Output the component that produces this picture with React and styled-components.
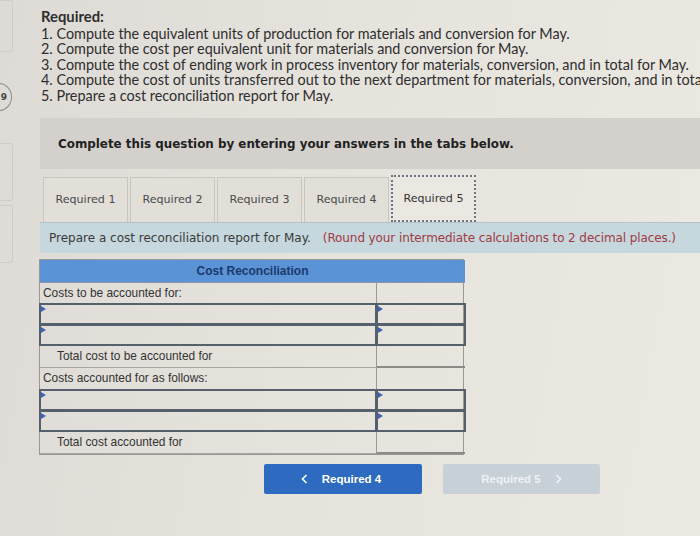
import React from "react";
import styled, { createGlobalStyle } from "styled-components";

const Global = createGlobalStyle`
  html, body { margin: 0; padding: 0; }
  body {
    width: 700px; height: 536px; overflow: hidden;
    background: linear-gradient(100deg, #dedbd6 0%, #e6e3dd 45%, #ece9e3 100%);
    font-family: "Liberation Sans", Arial, sans-serif;
  }
`;

const Page = styled.div`
  display: flex;
  width: 700px;
  height: 536px;
  overflow: hidden;
`;

const Rail = styled.div`
  width: 13px;
  flex: none;
  margin-right: 27px;
  display: flex;
  flex-direction: column;
`;

const RailBox = styled.div`
  height: ${(p) => p.$h}px;
  margin-top: ${(p) => p.$mt || 0}px;
  border: 1px solid #d0cdc8;
  border-left: none;
  border-radius: 0 3px 3px 0;
`;

const Badge = styled.div`
  margin-top: ${(p) => p.$mt}px;
  width: 26px;
  height: 28px;
  margin-left: -14px;
  border: 1px solid #8e8c88;
  border-radius: 50%;
  display: flex;
  align-items: center;
  justify-content: flex-end;
  padding-right: 4px;
  box-sizing: border-box;
  font: bold 9px "DejaVu Sans", sans-serif;
  color: #444;
`;

const Main = styled.div`
  flex: 1;
  min-width: 0;
  display: flex;
  flex-direction: column;
  padding-top: 9px;
`;

const Intro = styled.div`
  font-family: Lato, "Open Sans", sans-serif;
  font-size: 14.4px;
  line-height: 15.6px;
  color: #2e2e2e;
  white-space: nowrap;
  padding-left: 1px;
`;

const IntroTitle = styled.div`
  font-weight: 700;
  font-size: 14.8px;
  margin-bottom: 1px;
`;

const Banner = styled.div`
  margin-top: 14px;
  height: 51px;
  background: #d4d1cc;
  display: flex;
  align-items: center;
  padding-left: 18px;
  padding-top: 1px;
  box-sizing: border-box;
  font: bold 11.9px "DejaVu Sans", Verdana, sans-serif;
  color: #222;
  white-space: nowrap;
`;

const Tabs = styled.div`
  display: flex;
  align-items: flex-end;
  gap: 2px;
  margin-top: 5px;
  padding-left: 3px;
  height: 48px;
`;

const Tab = styled.div`
  width: 85px;
  height: ${(p) => (p.$active ? 47 : 45)}px;
  box-sizing: border-box;
  display: flex;
  align-items: center;
  justify-content: center;
  font: 11.1px "DejaVu Sans", Verdana, sans-serif;
  color: ${(p) => (p.$active ? "#333" : "#4a4a4a")};
  background: ${(p) => (p.$active ? "#ebe8e2" : "#e2dfd9")};
  border: ${(p) => (p.$active ? "2px dotted #6d7585" : "1px solid #c9c5bf")};
  border-bottom: ${(p) => (p.$active ? "2px dotted #6d7585" : "none")};
`;

const Info = styled.div`
  height: 30px;
  background: #c6d8dd;
  border-top: 1px solid #b3c3c8;
  display: flex;
  align-items: center;
  padding-left: 9px;
  font: 12px "DejaVu Sans", Verdana, sans-serif;
  color: #3a3a3a;
  white-space: nowrap;
`;

const Note = styled.span`
  color: #a23a44;
  margin-left: 12px;
  letter-spacing: -0.1px;
`;

const Table = styled.div`
  margin-top: 6px;
  margin-left: -1px;
  width: 425px;
  display: grid;
  grid-template-columns: 337px 88px;
  border: 1px solid #9a9896;
  box-sizing: border-box;
`;

const Head = styled.div`
  grid-column: 1 / 3;
  height: 22px;
  background: #5a93d6;
  display: flex;
  align-items: center;
  justify-content: center;
  font: bold 12px "Liberation Sans", Arial, sans-serif;
  color: #1c3a6c;
  border-bottom: 1px solid #8a98aa;
`;

const Cell = styled.div`
  position: relative;
  height: ${(p) => (p.$tall ? 22 : 21)}px;
  box-sizing: border-box;
  display: flex;
  align-items: center;
  padding-left: ${(p) => (p.$indent ? 17 : 3)}px;
  font: 11.9px "Liberation Sans", Arial, sans-serif;
  color: #333;
  border-right: ${(p) => (p.$last ? "none" : "1px solid #9a9896")};
  border-bottom: ${(p) => (p.$total ? "2px solid #8d8b88" : "1px solid #a8a6a3")};
  ${(p) =>
    p.$input &&
    `
    border: 2px solid #56606d;
    margin: -1px ${p.$last ? "-1px" : "0"} 0 -1px;
    height: 22px;
  `}
`;

const Marker = styled.span`
  position: absolute;
  left: 0;
  top: 1px;
  width: 0;
  height: 0;
  border-top: 3px solid transparent;
  border-bottom: 3px solid transparent;
  border-left: 5px solid #3e64b8;
`;

const Buttons = styled.div`
  display: flex;
  gap: 21px;
  margin-top: 9px;
  padding-left: 224px;
`;

const NavButton = styled.div`
  width: ${(p) => p.$w}px;
  height: 30px;
  border-radius: 2px;
  display: flex;
  align-items: center;
  justify-content: center;
  gap: 14px;
  font: bold 11.5px "Liberation Sans", Arial, sans-serif;
  color: ${(p) => (p.$disabled ? "#eef2f6" : "#fff")};
  background: ${(p) => (p.$disabled ? "#c8d0d8" : "#2d6ac0")};
  padding-right: ${(p) => (p.$disabled ? 0 : 4)}px;
`;

const Chevron = styled.svg`
  width: 7px;
  height: 10px;
`;

const rows = [
  { label: "Costs to be accounted for:" },
  { input: true },
  { input: true },
  { label: "Total cost to be accounted for", indent: true, total: true, tall: true },
  { label: "Costs accounted for as follows:", tall: true },
  { input: true },
  { input: true },
  { label: "Total cost accounted for", indent: true, total: true, tall: true },
];

export default function App() {
  return (
    <>
      <Global />
      <Page>
        <Rail>
          <RailBox $h={50} />
          <Badge $mt={31}>9</Badge>
          <RailBox $h={56} $mt={32} />
          <RailBox $h={56} $mt={4} />
        </Rail>
        <Main>
          <Intro>
            <IntroTitle>Required:</IntroTitle>
            <div>1. Compute the equivalent units of production for materials and conversion for May.</div>
            <div>2. Compute the cost per equivalent unit for materials and conversion for May.</div>
            <div>3. Compute the cost of ending work in process inventory for materials, conversion, and in total for May.</div>
            <div>4. Compute the cost of units transferred out to the next department for materials, conversion, and in total for May.</div>
            <div>5. Prepare a cost reconciliation report for May.</div>
          </Intro>
          <Banner>Complete this question by entering your answers in the tabs below.</Banner>
          <Tabs>
            <Tab>Required 1</Tab>
            <Tab>Required 2</Tab>
            <Tab>Required 3</Tab>
            <Tab>Required 4</Tab>
            <Tab $active>Required 5</Tab>
          </Tabs>
          <Info>
            Prepare a cost reconciliation report for May.
            <Note>(Round your intermediate calculations to 2 decimal places.)</Note>
          </Info>
          <Table>
            <Head>Cost Reconciliation</Head>
            {rows.map((r, i) => (
              <React.Fragment key={i}>
                <Cell $input={r.input} $indent={r.indent} $tall={r.tall}>
                  {r.input && <Marker />}
                  {r.label}
                </Cell>
                <Cell $input={r.input} $total={r.total} $tall={r.tall} $last>
                  {r.input && <Marker />}
                </Cell>
              </React.Fragment>
            ))}
          </Table>
          <Buttons>
            <NavButton $w={154}>
              <Chevron viewBox="0 0 7 10">
                <path d="M5.5 1 L1.5 5 L5.5 9" fill="none" stroke="#fff" strokeWidth="1.6" />
              </Chevron>
              Required 4
            </NavButton>
            <NavButton $w={157} $disabled>
              Required 5
              <Chevron viewBox="0 0 7 10">
                <path d="M1.5 1 L5.5 5 L1.5 9" fill="none" stroke="#eef2f6" strokeWidth="1.6" />
              </Chevron>
            </NavButton>
          </Buttons>
        </Main>
      </Page>
    </>
  );
}
